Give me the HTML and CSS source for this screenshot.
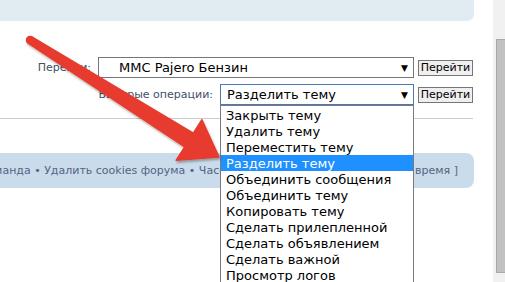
FILE: index.html
```html
<!DOCTYPE html>
<html lang="ru">
<head>
<meta charset="utf-8">
<link rel="stylesheet" href="styles.css">
</head>
<body>
<div class="window">
  <div class="page">
    <div class="top-band"></div>
    <div class="jump">
      <div class="jump-row">
        <span class="label">Перейти:</span>
        <div class="select select-wide"><span class="sel-text indent">MMC Pajero Бензин</span><span class="caret">▼</span></div>
        <button class="btn">Перейти</button>
      </div>
      <div class="jump-row">
        <span class="label">Быстрые операции:</span>
        <div class="select select-narrow focused"><span class="sel-text">Разделить тему</span><span class="caret">▼</span>
          <ul class="options">
            <li>Закрыть тему</li>
            <li>Удалить тему</li>
            <li>Переместить тему</li>
            <li class="active">Разделить тему</li>
            <li>Объединить сообщения</li>
            <li>Объединить тему</li>
            <li>Копировать тему</li>
            <li>Сделать прилепленной</li>
            <li>Сделать объявлением</li>
            <li>Сделать важной</li>
            <li>Просмотр логов</li>
          </ul>
        </div>
        <button class="btn">Перейти</button>
      </div>
    </div>
    <hr class="divider">
    <div class="navbar">
      <p class="nav-text">Наша команда • Удалить cookies форума • Часовой пояс: UTC + 3 часа [ Летнее время ]</p>
    </div>
  </div>
  <div class="scrollbar"><div class="thumb"></div></div>
  <svg class="arrow" width="505" height="282" viewBox="0 0 505 282">
    <defs>
      <filter id="sh" x="-10%" y="-10%" width="130%" height="130%">
        <feDropShadow dx="1" dy="2" stdDeviation="1.2" flood-color="#000" flood-opacity="0.3"/>
      </filter>
    </defs>
    <g filter="url(#sh)" fill="#e63b2e" stroke="#e63b2e" stroke-linejoin="round" stroke-width="1.5">
      <circle cx="30" cy="40" r="3.5"/>
      <path d="M28.1,43 L31.9,37 L193.3,133.2 L201.9,119.7 L219,157 L176.1,160.3 L184.7,146.8 Z"/>
    </g>
  </svg>
</div>
</body>
</html>
```

FILE: styles.css
```css
* { box-sizing: border-box; }
html, body { margin: 0; padding: 0; background: #fff; }
body {
  width: 505px;
  height: 282px;
  overflow: hidden;
  font-family: "DejaVu Sans", Verdana, sans-serif;
}
.window {
  position: relative;
  display: flex;
  width: 505px;
  height: 282px;
}
.page {
  width: 493px;
  height: 282px;
  overflow: hidden;
}
.top-band {
  width: 474px;
  height: 21px;
  background: #e1ebf2;
  border-bottom-right-radius: 7px;
}
.jump {
  display: flex;
  flex-direction: column;
  gap: 6px;
  margin-top: 36px;
  padding-right: 20px;
}
.jump-row {
  display: flex;
  justify-content: flex-end;
  align-items: center;
  height: 21px;
}
.label {
  font-size: 11px;
  color: #425067;
  margin-right: 7px;
}
.select {
  position: relative;
  height: 21px;
  border: 1px solid #767676;
  background: #fff;
  display: flex;
  align-items: center;
  font-size: 13px;
  color: #000;
}
.select-wide { width: 316px; }
.select-narrow { width: 194px; }
.select.focused { border-color: #4d78b8; }
.sel-text { padding-left: 6px; flex: 1; white-space: nowrap; }
.sel-text.indent { padding-left: 20px; }
.caret {
  font-size: 9px;
  margin-right: 5px;
  color: #000;
}
.btn {
  margin-left: 4px;
  width: 55px;
  height: 16px;
  padding: 0;
  font-family: "DejaVu Sans", Verdana, sans-serif;
  font-size: 11px;
  line-height: 14px;
  color: #000;
  background: #efefef;
  border: 1px solid #767676;
  border-radius: 0;
}
.options {
  position: absolute;
  left: -1px;
  top: 20px;
  width: 194px;
  margin: 0;
  padding: 1px 0 0 0;
  list-style: none;
  background: #fff;
  border: 1px solid #7a7a7a;
  z-index: 2;
}
.options li {
  height: 16px;
  line-height: 17px;
  padding-left: 5px;
  font-size: 13px;
  color: #000;
  white-space: nowrap;
}
.options li.active {
  background: #1e90ff;
  color: #fff;
}
.divider {
  width: 473px;
  margin: 13px 0 0 0;
  border: 0;
  border-top: 1px solid #cccccc;
  height: 0;
}
.navbar {
  width: 474px;
  height: 35px;
  margin-top: 34px;
  background: #cadceb;
  border-radius: 0 8px 8px 0;
  overflow: hidden;
  display: flex;
  justify-content: flex-end;
  align-items: center;
  padding-right: 16px;
}
.nav-text {
  margin: 0;
  white-space: nowrap;
  font-size: 11px;
  color: #536482;
}
.scrollbar {
  width: 12px;
  height: 282px;
  background: #f1f1f1;
  padding: 39px 0 9px 3px;
}
.thumb {
  width: 9px;
  height: 234px;
  background: #c1c1c1;
  border: 1px solid #a9a9a9;
  border-right: 0;
}
.arrow {
  position: absolute;
  left: 0;
  top: 0;
  pointer-events: none;
  z-index: 5;
}
```
